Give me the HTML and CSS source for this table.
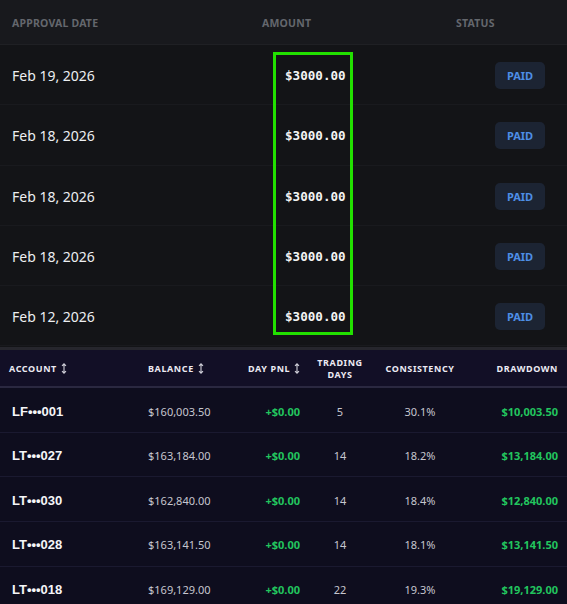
FILE: index.html
```html
<!DOCTYPE html>
<html>
<head>
<meta charset="utf-8">
<link rel="stylesheet" href="styles.css">
</head>
<body>
<div class="payouts">
  <div class="p-head">
    <div class="ph-date">Approval Date</div>
    <div class="ph-amount">Amount</div>
    <div class="ph-status">Status</div>
  </div>
  <div class="p-row"><div class="p-date">Feb 19, 2026</div><div class="p-amount">$3000.00</div><div class="p-status"><span class="badge">PAID</span></div></div>
  <div class="p-row"><div class="p-date">Feb 18, 2026</div><div class="p-amount">$3000.00</div><div class="p-status"><span class="badge">PAID</span></div></div>
  <div class="p-row"><div class="p-date">Feb 18, 2026</div><div class="p-amount">$3000.00</div><div class="p-status"><span class="badge">PAID</span></div></div>
  <div class="p-row"><div class="p-date">Feb 18, 2026</div><div class="p-amount">$3000.00</div><div class="p-status"><span class="badge">PAID</span></div></div>
  <div class="p-row"><div class="p-date">Feb 12, 2026</div><div class="p-amount">$3000.00</div><div class="p-status"><span class="badge">PAID</span></div></div>
  <div class="highlight"></div>
</div>
<div class="accounts">
  <div class="a-head">
    <div class="c-acc">Account <svg class="sort" viewBox="0 0 6 11" width="6" height="11"><path d="M3 0.8V10.2M1 2.8L3 0.8L5 2.8M1 8.2L3 10.2L5 8.2" fill="none" stroke="currentColor" stroke-width="1.1"/></svg></div>
    <div class="c-bal">Balance <svg class="sort" viewBox="0 0 6 11" width="6" height="11"><path d="M3 0.8V10.2M1 2.8L3 0.8L5 2.8M1 8.2L3 10.2L5 8.2" fill="none" stroke="currentColor" stroke-width="1.1"/></svg></div>
    <div class="c-pnl">Day PnL <svg class="sort" viewBox="0 0 6 11" width="6" height="11"><path d="M3 0.8V10.2M1 2.8L3 0.8L5 2.8M1 8.2L3 10.2L5 8.2" fill="none" stroke="currentColor" stroke-width="1.1"/></svg></div>
    <div class="c-days">Trading<br>Days</div>
    <div class="c-cons">Consistency</div>
    <div class="c-dd">Drawdown</div>
  </div>
  <div class="a-row"><div class="c-acc id">LF•••001</div><div class="c-bal">$160,003.50</div><div class="c-pnl green">+$0.00</div><div class="c-days">5</div><div class="c-cons">30.1%</div><div class="c-dd green">$10,003.50</div></div>
  <div class="a-row"><div class="c-acc id">LT•••027</div><div class="c-bal">$163,184.00</div><div class="c-pnl green">+$0.00</div><div class="c-days">14</div><div class="c-cons">18.2%</div><div class="c-dd green">$13,184.00</div></div>
  <div class="a-row"><div class="c-acc id">LT•••030</div><div class="c-bal">$162,840.00</div><div class="c-pnl green">+$0.00</div><div class="c-days">14</div><div class="c-cons">18.4%</div><div class="c-dd green">$12,840.00</div></div>
  <div class="a-row"><div class="c-acc id">LT•••028</div><div class="c-bal">$163,141.50</div><div class="c-pnl green">+$0.00</div><div class="c-days">14</div><div class="c-cons">18.1%</div><div class="c-dd green">$13,141.50</div></div>
  <div class="a-row"><div class="c-acc id">LT•••018</div><div class="c-bal">$169,129.00</div><div class="c-pnl green">+$0.00</div><div class="c-days">22</div><div class="c-cons">19.3%</div><div class="c-dd green">$19,129.00</div></div>
</div>
</body>
</html>
```
FILE: styles.css
```css
* { box-sizing: border-box; }
html, body { margin: 0; padding: 0; }
body {
  width: 567px;
  height: 604px;
  overflow: hidden;
  background: #0e0d1e;
  font-family: "Noto Sans", "Open Sans", sans-serif;
}
.payouts {
  position: relative;
  background: #131417;
  border-bottom: 3px solid #26262d;
  padding-bottom: 1px;
}
.p-head {
  height: 45px;
  display: flex;
  align-items: center;
  padding-top: 1px;
  background: #18191d;
  border-bottom: 1px solid #1f2024;
  font-size: 10.5px;
  font-weight: 700;
  text-transform: uppercase;
  color: #64676d;
  letter-spacing: 0.2px;
}
.ph-date { padding-left: 12px; width: 262px; }
.ph-amount { width: 194px; }
.p-row {
  height: 60.25px;
  display: flex;
  align-items: center;
  padding-top: 2px;
  border-bottom: 1px solid #191a1e;
}
.p-row:last-of-type { border-bottom: none; }
.p-date {
  padding-left: 12px;
  width: 285px;
  font-size: 14px;
  color: #eceef1;
}
.p-amount {
  width: 210px;
  font-family: "DejaVu Sans Mono", "Liberation Mono", monospace;
  font-weight: 700;
  font-size: 12.6px;
  color: #f4f4f4;
}
.badge {
  display: inline-flex;
  align-items: center;
  justify-content: center;
  width: 50px;
  height: 27px;
  border-radius: 5px;
  background: #1c2433;
  color: #4d8ee6;
  font-size: 11px;
  font-weight: 700;
}
.highlight {
  position: absolute;
  left: 273px;
  top: 52px;
  width: 80px;
  height: 283px;
  border: 3px solid #22e000;
}
.accounts { background: #0e0d1e; }
.a-head, .a-row {
  display: grid;
  grid-template-columns: 139px 100px 52px 80px 80px 98px;
  padding: 0 9px;
  align-items: center;
}
.a-head {
  height: 38px;
  padding-top: 2px;
  background: #120f26;
  border-bottom: 2px solid #2a2840;
  font-size: 9px;
  font-weight: 700;
  text-transform: uppercase;
  letter-spacing: 0.6px;
  color: #eceaf3;
  white-space: nowrap;
}
.a-head > div { line-height: 12px; }
.a-row {
  height: 44.6px;
  padding-top: 2px;
  border-bottom: 1px solid #1a1930;
  font-size: 11px;
  color: #c6c6cf;
}
.sort {
  color: #cfcfd8;
  vertical-align: -2px;
  margin-left: 1px;
}
.c-acc { text-align: left; }
.c-bal { text-align: left; }
.c-pnl { text-align: right; }
.c-days { text-align: center; }
.c-cons { text-align: center; }
.c-dd { text-align: right; }
.id {
  padding-left: 3px;
  font-family: "Liberation Sans", Arial, sans-serif;
  font-weight: 700;
  font-size: 13px;
  color: #f5f5f8;
}
.green { color: #22c55e; font-weight: 700; }
```
